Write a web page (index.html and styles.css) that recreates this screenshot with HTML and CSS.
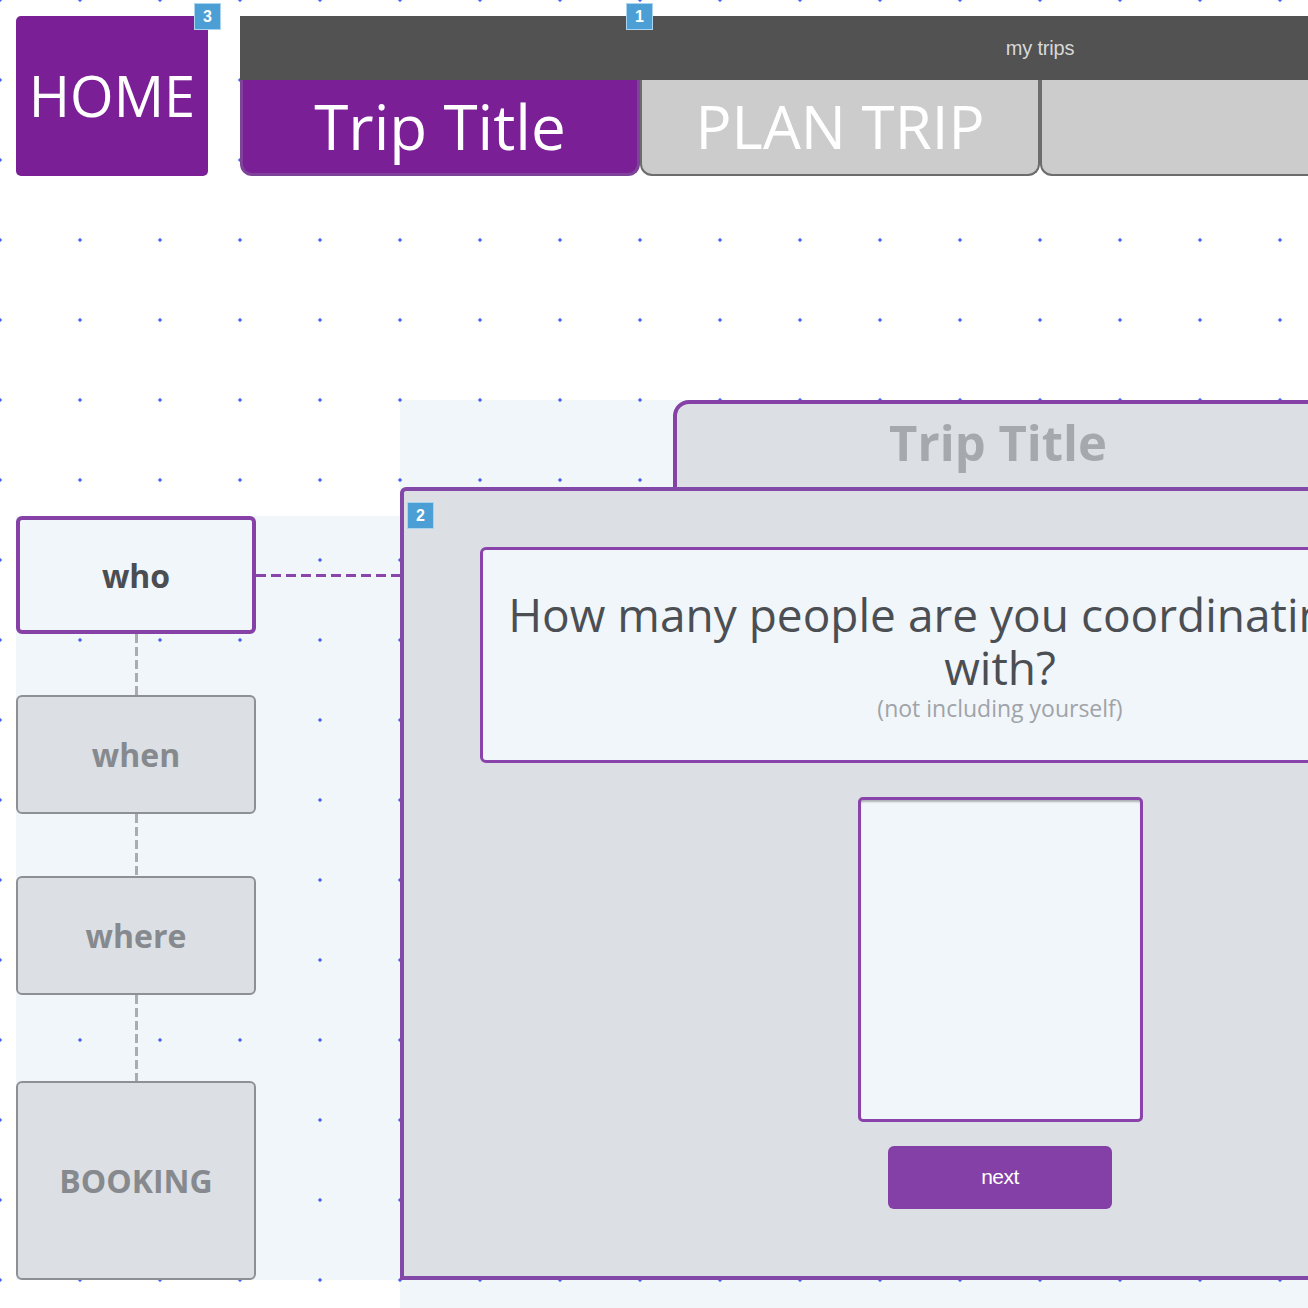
FILE: index.html
```html
<!DOCTYPE html>
<html lang="en">
<head>
<meta charset="utf-8">
<title>Trip planner – who</title>
<link rel="stylesheet" href="styles.css">
</head>
<body>
<div class="page">
  <header class="top">
    <a class="home" href="#">HOME<span class="badge badge-home">3</span></a>
    <nav class="nav">
      <div class="bar"><span class="bar-link">my trips</span></div>
      <div class="tabs">
        <div class="tab tab-active">Trip Title</div>
        <div class="tab">PLAN TRIP</div>
        <div class="tab"></div>
        <div class="tab"></div>
      </div>
      <span class="badge badge-nav">1</span>
    </nav>
  </header>

  <main class="workspace">
    <aside class="steps">
      <div class="step-row">
        <div class="step step-current">who</div>
        <div class="link-h"></div>
      </div>
      <div class="link-v link-v1"></div>
      <div class="step">when</div>
      <div class="link-v link-v2"></div>
      <div class="step">where</div>
      <div class="link-v link-v3"></div>
      <div class="step step-booking">BOOKING</div>
    </aside>

    <section class="stage">
      <div class="back-tab">Trip Title</div>
      <div class="panel">
        <span class="badge badge-panel">2</span>
        <div class="question">
          <p class="q-text">How many people are you coordinating with?</p>
          <p class="q-note">(not including yourself)</p>
        </div>
        <textarea class="answer" aria-label="number of people"></textarea>
        <button class="next" type="button">next</button>
      </div>
    </section>
  </main>
</div>
</body>
</html>
```

FILE: styles.css
```css
html, body {
  margin: 0;
  padding: 0;
  overflow: hidden;
  width: 1308px;
  height: 1308px;
}

body {
  background-color: #ffffff;
  background-image: radial-gradient(circle at center, #4a66f6 0, #4a66f6 1.4px, rgba(74,102,246,0) 2px);
  background-size: 80px 80px;
  background-position: -40px -40px;
  background-attachment: fixed;
  font-family: "Open Sans", "Liberation Sans", sans-serif;
}

.page {
  padding: 16px 0 0 16px;
  width: 2000px;
}

/* ---------- header ---------- */
.top {
  display: flex;
  gap: 32px;
  height: 160px;
}

.home {
  position: relative;
  flex: 0 0 192px;
  height: 160px;
  background: #7b1f96;
  border-radius: 5px;
  color: #ffffff;
  text-decoration: none;
  font-size: 56px;
  display: flex;
  align-items: center;
  justify-content: center;
  padding-bottom: 2px;
  box-sizing: border-box;
}

.nav {
  position: relative;
  flex: 0 0 1600px;
  display: flex;
  flex-direction: column;
}

.bar {
  height: 64px;
  background: #525252;
  display: flex;
  align-items: center;
  justify-content: center;
}

.bar-link {
  font-family: "Liberation Sans", Arial, sans-serif;
  font-size: 20px;
  color: #d8d8d8;
  letter-spacing: -0.2px;
}

.tabs {
  display: flex;
  height: 96px;
}

.tab {
  box-sizing: border-box;
  flex: 0 0 400px;
  height: 96px;
  background: #cccccc;
  border: 2px solid #6c6c6c;
  border-top: none;
  border-radius: 0 0 12px 12px;
  color: #ffffff;
  font-size: 60px;
  display: flex;
  align-items: center;
  justify-content: center;
  padding-bottom: 2px;
}

.tab-active {
  background: #7b1f96;
  border: 3px solid #7d4399;
  border-top: none;
  font-size: 62px;
}

/* ---------- badges ---------- */
.badge {
  position: absolute;
  box-sizing: border-box;
  width: 27px;
  height: 27px;
  background: #4b9fd5;
  border: 1px solid #abd5ef;
  color: #ffffff;
  font-family: "Liberation Sans", Arial, sans-serif;
  font-weight: bold;
  font-size: 16px;
  line-height: 25px;
  text-align: center;
}

.badge-home { left: 178px; top: -13px; }
.badge-nav { left: 386px; top: -13px; }
.badge-panel { left: 3px; top: 11px; }

/* ---------- workspace ---------- */
.workspace {
  display: flex;
  margin-top: 224px;
  height: 908px;
}

.steps,
.stage {
  background-color: #f1f6fa;
  background-image: radial-gradient(circle at center, #4a66f6 0, #4a66f6 1.4px, rgba(74,102,246,0) 2px);
  background-size: 80px 80px;
  background-position: -40px -40px;
  background-attachment: fixed;
}

.steps {
  flex: 0 0 384px;
  margin-top: 116px;
  height: 764px;
  display: flex;
  flex-direction: column;
  align-items: flex-start;
}

.step-row {
  display: flex;
  align-items: center;
  width: 384px;
}

.step {
  box-sizing: border-box;
  width: 240px;
  height: 119px;
  flex: 0 0 auto;
  background: #dce0e4;
  border: 2px solid #8d9094;
  border-radius: 6px;
  color: #86898d;
  font-weight: bold;
  font-size: 32px;
  display: flex;
  align-items: center;
  justify-content: center;
}

.step-current {
  height: 118px;
  background: #f1f6fa;
  border: 4px solid #8541a6;
  color: #4a4d52;
}

.step-booking {
  height: 199px;
}

.link-h {
  flex: 1;
  height: 3px;
  background: repeating-linear-gradient(to right, #8a45aa 0, #8a45aa 10px, transparent 10px, transparent 15px);
}

.link-v {
  width: 3px;
  margin-left: 119px;
  background: repeating-linear-gradient(to bottom, #a9acb0 0, #a9acb0 9px, transparent 9px, transparent 13px);
}

.link-v1 { height: 61px; }
.link-v2 { height: 62px; }
.link-v3 { height: 86px; }

/* ---------- stage ---------- */
.stage {
  flex: 0 0 1300px;
  height: 908px;
  display: flex;
  flex-direction: column;
  align-items: flex-start;
}

.back-tab {
  box-sizing: border-box;
  margin-left: 273px;
  width: 650px;
  height: 87px;
  background: #dce0e4;
  border: 4px solid #8541a6;
  border-bottom: none;
  border-radius: 16px 16px 0 0;
  color: #a5a8ac;
  font-weight: bold;
  font-size: 49px;
  display: flex;
  align-items: center;
  justify-content: center;
  padding-bottom: 8px;
}

.panel {
  position: relative;
  box-sizing: border-box;
  width: 1200px;
  height: 793px;
  background: #dce0e4;
  border: 4px solid #8249a8;
  border-radius: 6px 0 0 0;
  padding-top: 56px;
  display: flex;
  flex-direction: column;
  align-items: center;
}

.question {
  box-sizing: border-box;
  width: 1040px;
  height: 216px;
  flex: 0 0 auto;
  background: #f1f6fa;
  border: 3px solid #8a43ab;
  border-radius: 6px;
  padding-top: 38px;
  text-align: center;
}

.q-text {
  margin: 0 auto;
  width: 780px;
  font-size: 46px;
  line-height: 53px;
  color: #4b4f54;
  text-indent: -140px;
}

.q-note {
  margin: 0;
  font-size: 23px;
  line-height: 28px;
  color: #a0a3a8;
}

.answer {
  box-sizing: border-box;
  display: block;
  margin: 34px 0 0;
  width: 285px;
  height: 325px;
  flex: 0 0 auto;
  padding: 0;
  resize: none;
  background: #f1f6fa;
  border: 3px solid #8a43ab;
  border-radius: 5px;
  box-shadow: inset 0 3px 2px -1px rgba(0,0,0,0.28);
  outline: none;
}

.next {
  margin-top: 24px;
  width: 224px;
  height: 63px;
  flex: 0 0 auto;
  background: #8440a6;
  border: none;
  border-radius: 6px;
  color: #ffffff;
  font-family: "Liberation Sans", Arial, sans-serif;
  font-size: 21px;
  letter-spacing: -0.5px;
  padding: 0 0 2px;
}
```
